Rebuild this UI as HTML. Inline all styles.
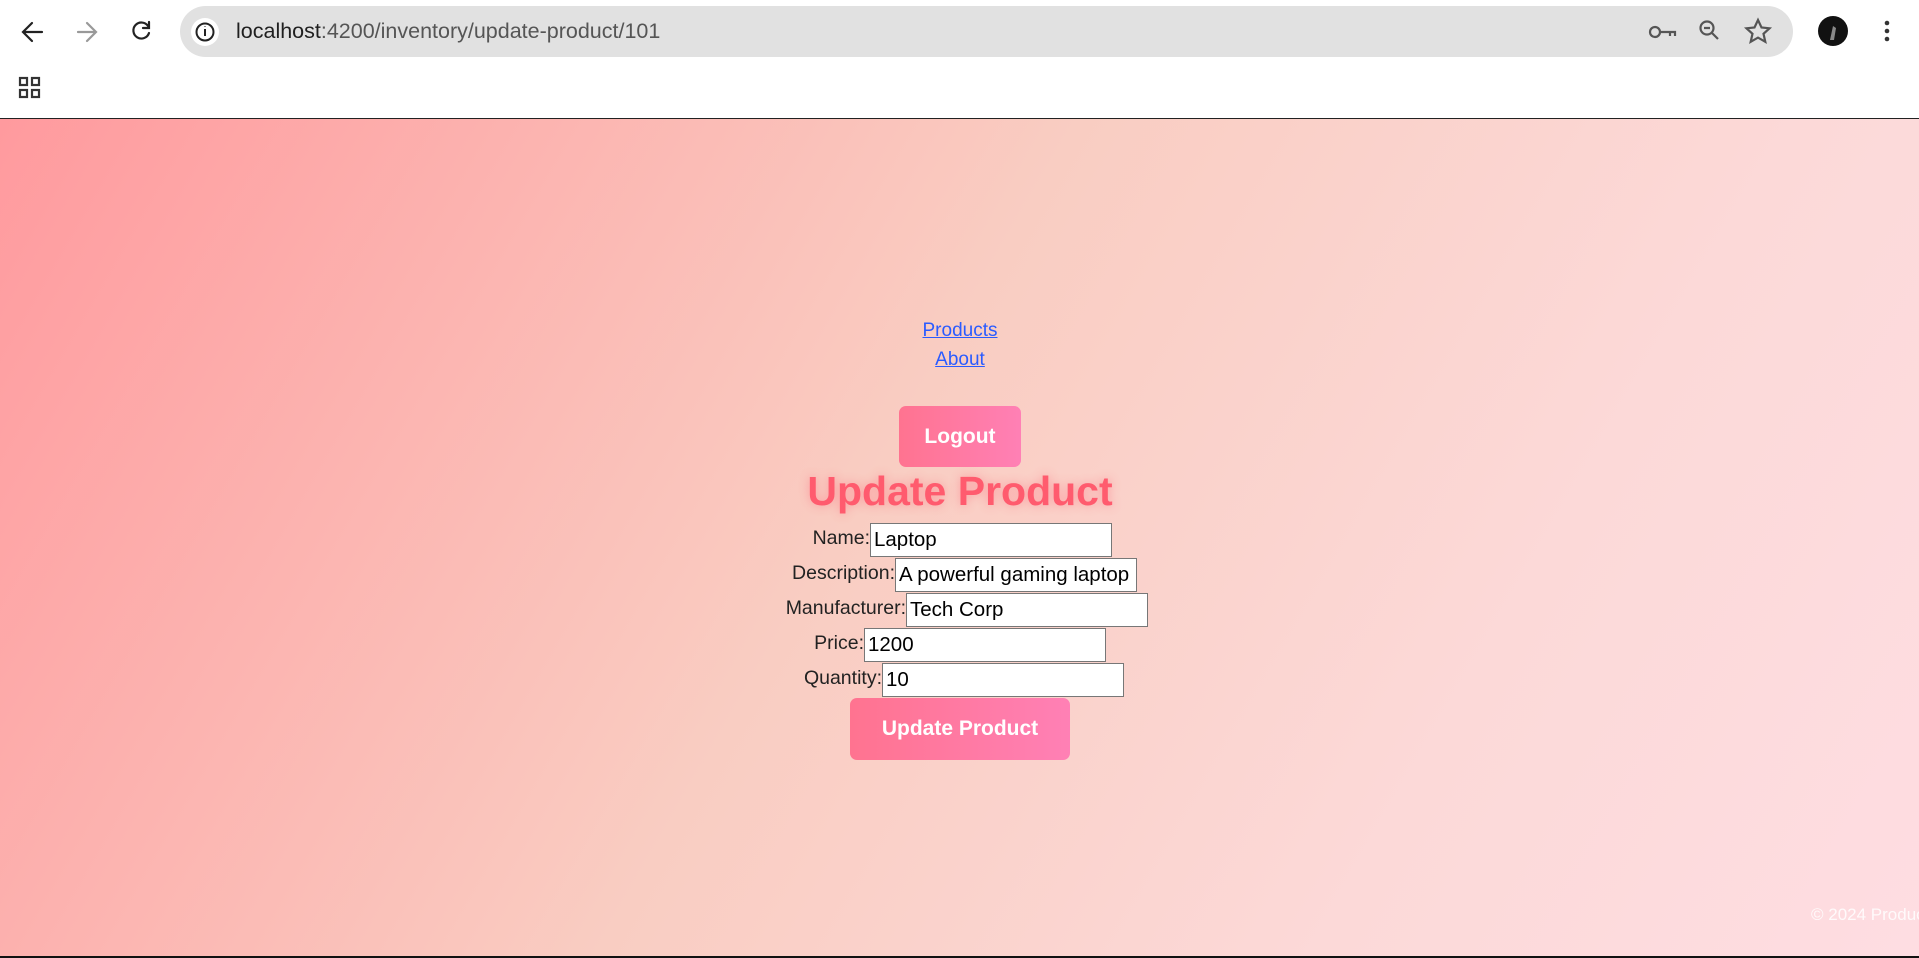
<!DOCTYPE html>
<html><head><meta charset="utf-8"><style>
*{margin:0;padding:0;box-sizing:border-box}
body{width:1919px;height:958px;overflow:hidden;font-family:"Liberation Sans",sans-serif;background:#fff;position:relative}
.bar{position:absolute;left:180px;top:6px;width:1613px;height:51px;background:#e1e1e1;border-radius:26px}
.url{position:absolute;left:236px;top:19px;font-size:21.5px;color:#555;line-height:24px}
.url b{font-weight:normal;color:#1f1f1f}
.content{position:absolute;left:0;top:118px;width:1919px;height:840px;background:linear-gradient(120deg,#ff9a9e 0%,#f9cdc2 45%,#fcd9d8 75%,#fedde2 100%);border-top:1px solid #222;border-bottom:2px solid #111}
a{position:absolute;color:#2a5bff;font-size:19px;text-decoration:underline;width:200px;text-align:center;left:860px}
.btn{position:absolute;background:linear-gradient(90deg,#ff7390,#ff80b5);color:#fff;font-weight:bold;font-size:21px;border-radius:7px;display:flex;align-items:center;justify-content:center}
h1{position:absolute;left:660px;width:600px;text-align:center;top:349px;font-size:41px;color:#ff5b6e;text-shadow:0 0 10px rgba(255,90,110,.45)}
.lab{position:absolute;font-size:19.5px;color:#222;text-align:right;width:300px}
.in{position:absolute;width:242px;height:34px;background:#fff;border:1px solid #777;font-size:20.5px;padding-left:3px;line-height:32px;color:#000;white-space:nowrap;overflow:hidden}
.foot{position:absolute;left:1811px;top:786px;font-size:17px;color:rgba(255,255,255,.85);white-space:nowrap}
</style></head><body>
<svg style="position:absolute;left:0;top:0" width="1919" height="118">
<g stroke="#222" stroke-width="2.2" fill="none" stroke-linecap="round">
<path d="M42 32H24M32 23l-9 9 9 9"/>
<path d="M78 32h17M87 23l9 9-9 9" stroke="#999"/>
<path d="M148 26a8 8 0 1 0 1 7M149 22v6h-6"/>
</g>
</svg>
<div class="bar"></div>
<svg style="position:absolute;left:0;top:0" width="1919" height="118">
<circle cx="205" cy="32" r="14" fill="#fff"/>
<circle cx="205" cy="32" r="8.5" fill="none" stroke="#222" stroke-width="2"/>
<path d="M205 29v7M205 26v0.5" stroke="#222" stroke-width="2"/>
<g fill="none" stroke="#555" stroke-width="2.2">
<circle cx="1655" cy="32" r="5"/><path d="M1660 32h15v4M1670 32v4"/>
<circle cx="1707" cy="28" r="6.5"/><path d="M1704 28h6M1712 33l6 6"/>
<path d="M1758 20l3.5 7.5 8 .8-6 5.5 1.8 8-7.3-4.2-7.3 4.2 1.8-8-6-5.5 8-.8z"/>
</g>
<circle cx="1833" cy="31" r="15" fill="#111"/><path d="M1830 40l3-14 3 2-2 12z" fill="#888"/>
<g fill="#333"><circle cx="1887" cy="23" r="2.3"/><circle cx="1887" cy="31" r="2.3"/><circle cx="1887" cy="39" r="2.3"/></g>
<g fill="none" stroke="#333" stroke-width="2.2"><rect x="20" y="78" width="7" height="7"/><rect x="32" y="78" width="7" height="7"/><rect x="20" y="90" width="7" height="7"/><rect x="32" y="90" width="7" height="7"/></g>
</svg>
<div class="url"><b>localhost</b>:4200/inventory/update-product/101</div>
<div class="content">
<a style="top:201px">Products</a>
<a style="top:230px">About</a>
<div class="btn" style="left:899px;top:287px;width:122px;height:61px">Logout</div>
<h1>Update Product</h1>
<div class="lab" style="left:570px;top:408px">Name:</div><div class="in" style="left:870px;top:404px">Laptop</div>
<div class="lab" style="left:595px;top:443px">Description:</div><div class="in" style="left:895px;top:439px">A powerful gaming laptop</div>
<div class="lab" style="left:606px;top:478px">Manufacturer:</div><div class="in" style="left:906px;top:474px">Tech Corp</div>
<div class="lab" style="left:564px;top:513px">Price:</div><div class="in" style="left:864px;top:509px">1200</div>
<div class="lab" style="left:582px;top:548px">Quantity:</div><div class="in" style="left:882px;top:544px">10</div>
<div class="btn" style="left:850px;top:579px;width:220px;height:62px">Update Product</div>
<div class="foot">© 2024 Product Inventory</div>
</div>
</body></html>
